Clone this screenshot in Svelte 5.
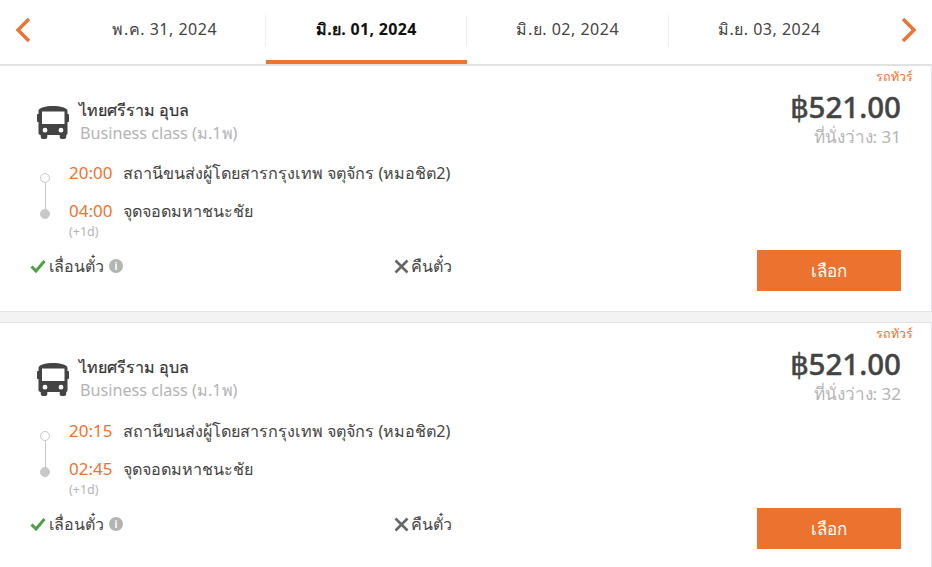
<script>
  let dates = ['พ.ค. 31, 2024', 'มิ.ย. 01, 2024', 'มิ.ย. 02, 2024', 'มิ.ย. 03, 2024']
  let active = 1

  let trips = [
    { from: '20:00', to: '04:00', seats: 31 },
    { from: '20:15', to: '02:45', seats: 32 }
  ]
</script>

<div class="page">
  <div class="tabs">
    <button class="arrow" aria-label="prev">
      <svg width="16" height="26" viewBox="0 0 16 26"><path d="M14 2 L3 13 L14 24" fill="none" stroke="#ee7230" stroke-width="3.4"/></svg>
    </button>
    <div class="dates">
      {#each dates as d, i}
        <div class="date" class:active={i === active} class:first={i === 0}>
          <span>{d}</span>
        </div>
      {/each}
    </div>
    <button class="arrow next" aria-label="next">
      <svg width="16" height="26" viewBox="0 0 16 26"><path d="M2 2 L13 13 L2 24" fill="none" stroke="#ee7230" stroke-width="3.4"/></svg>
    </button>
  </div>

  {#each trips as t}
    <div class="card">
      <div class="tag">รถทัวร์</div>
      <div class="top">
        <div class="company">
          <svg class="bus" width="32" height="33" viewBox="0 0 32 33">
            <path fill="#444" fill-rule="evenodd" d="M1.500 5C1.500 1.500 9 0 16 0s14.500 1.500 14.500 5v3H31c.6 0 1 .4 1 1v6c0 .6-.4 1-1 1h-.5v11c0 1-.5 1.800-1.300 2.200V31c0 1.100-.9 2-2 2h-2.500c-1.100 0-2-.9-2-2v-2H10.300v2c0 1.100-.9 2-2 2H5.800c-1.100 0-2-.9-2-2v-1.800C2 28.800 1.500 28 1.500 27V16H1c-.6 0-1-.4-1-1V9c0-.6.4-1 1-1h.5ZM5 5.500V18H27.500V5.500ZM8 21.800a2.400 2.400 0 1 0 0 4.800 2.400 2.400 0 0 0 0-4.800ZM24 21.800a2.400 2.400 0 1 0 0 4.800 2.400 2.400 0 0 0 0-4.800Z"/>
          </svg>
          <div>
            <div class="name">ไทยศรีราม อุบล</div>
            <div class="klass">Business class (ม.1พ)</div>
          </div>
        </div>
        <div class="price">
          <div class="amount">฿521.00</div>
          <div class="seats">ที่นั่งว่าง: {t.seats}</div>
        </div>
      </div>

      <div class="route">
        <div class="line">
          <span class="dot"></span>
          <span class="rail"></span>
          <span class="dot fill"></span>
        </div>
        <div class="stops">
          <div class="stop"><span class="time">{t.from}</span><span>สถานีขนส่งผู้โดยสารกรุงเทพ จตุจักร (หมอชิต2)</span></div>
          <div class="stop second"><span class="time">{t.to}</span><span>จุดจอดมหาชนะชัย</span></div>
          <div class="plus">(+1d)</div>
        </div>
      </div>

      <div class="bottom">
        <div class="opt change">
          <svg width="16" height="14" viewBox="0 0 16 14"><path d="M1.500 7.500 L6 12 L14.500 2" fill="none" stroke="#4f9e4a" stroke-width="3"/></svg>
          <span>เลื่อนตั๋ว</span>
          <span class="info">i</span>
        </div>
        <div class="opt refund">
          <svg width="15" height="15" viewBox="0 0 15 15"><path d="M1.500 1.500 L13.500 13.500 M13.500 1.500 L1.500 13.500" stroke="#666" stroke-width="2.600"/></svg>
          <span>คืนตั๋ว</span>
        </div>
        <button class="pick">เลือก</button>
      </div>
    </div>
  {/each}
</div>

<style>
  :global(body) {
    margin: 0;
    background: #fff;
    overflow: hidden;
  }

  .page {
    width: 932px;
    height: 567px;
    overflow: hidden;
    background: #f3f3f3;
    font-family: "Noto Sans", "Open Sans", "Liberation Sans", sans-serif;
    color: #444;
  }

  .tabs {
    display: flex;
    align-items: flex-start;
    height: 64px;
    padding: 0 15px;
    background: #fff;
    border-bottom: 2px solid #e2e2e2;
  }
  .arrow {
    background: none;
    border: 0;
    padding: 0;
    margin-top: 17px;
    width: 16px;
    height: 26px;
  }
  .arrow.next { margin-left: auto; }

  .dates {
    display: flex;
    margin-left: 33px;
    height: 64px;
  }
  .date {
    width: 201.500px;
    height: 64px;
    box-sizing: border-box;
    padding-top: 15px;
    display: flex;
    justify-content: center;
    position: relative;
    font-size: 16px;
    line-height: 29px;
    letter-spacing: 0.5px;
    color: #444;
    border-bottom: 4px solid transparent;
  }
  .date::before {
    content: "";
    position: absolute;
    left: -1px;
    top: 15px;
    height: 31px;
    width: 1px;
    background: #eeeef0;
  }
  .date.first::before { display: none; }
  .date.active {
    color: #111;
    font-weight: 700;
    letter-spacing: 0.3px;
    border-bottom-color: #ee7230;
  }

  .card {
    position: relative;
    box-sizing: border-box;
    height: 246px;
    margin-bottom: 10px;
    padding: 30px 30px 0 30px;
    background: #fff;
    border-right: 1px solid #e4e4e6;
    border-bottom: 1px solid #e4e4e6;
  }
  .card + .card {
    border-top: 1px solid #e4e4e6;
  }

  .tag {
    position: absolute;
    right: 18px;
    top: 2px;
    font-size: 12.500px;
    line-height: 18px;
    color: #ee7230;
  }

  .top {
    display: flex;
    justify-content: space-between;
    align-items: flex-start;
  }
  .company {
    display: flex;
    gap: 11px;
    padding-left: 6px;
  }
  .bus { margin-top: 10px; margin-left: 1px; margin-right: -1px; }
  .name {
    font-size: 16px;
    line-height: 28px;
    color: #333;
    -webkit-text-stroke: 0.2px #333;
  }
  .klass {
    font-size: 16.200px;
    line-height: 20px;
    color: #b4b4b4;
    margin: -1px 0 0 1px;
  }
  .price { text-align: right; }
  .amount {
    font-size: 29.500px;
    line-height: 30px;
    font-weight: 500;
    color: #444;
    -webkit-text-stroke: 0.4px #444;
    margin-top: -4px;
  }
  .seats {
    font-size: 17px;
    line-height: 24px;
    color: #b4b4b4;
    margin-top: 3px;
  }

  .route {
    display: flex;
    margin-top: 12px;
  }
  .card + .card .route { margin-top: 13px; }
  .line {
    width: 30px;
    margin-right: 9px;
    display: flex;
    flex-direction: column;
    align-items: center;
    padding-top: 12px;
  }
  .dot {
    width: 10px;
    height: 10px;
    box-sizing: border-box;
    border: 1px solid #c8c8c8;
    border-radius: 50%;
    background: #fff;
  }
  .dot.fill { background: #c8c8c8; }
  .rail {
    width: 1px;
    height: 26px;
    background: #c8c8c8;
  }
  .stops { font-size: 16.150px; color: #444; }
  .stop {
    display: flex;
    line-height: 24px;
  }
  .stop.second { margin-top: 14px; }
  .time {
    width: 54px;
    font-size: 17px;
    color: #ee7230;
  }
  .plus {
    font-size: 12.500px;
    line-height: 18px;
    color: #b4b4b4;
  }

  .bottom {
    display: flex;
    align-items: flex-start;
    margin-top: 13px;
    position: relative;
  }
  .opt {
    display: flex;
    align-items: center;
    gap: 3px;
    font-size: 16px;
    line-height: 24px;
    color: #444;
  }
  .change { width: 364px; }
  .refund { flex: 1; gap: 2px; }
  .info {
    width: 14px;
    height: 14px;
    margin-left: 2px;
    border-radius: 50%;
    background: #b4b4b4;
    color: #fff;
    font-size: 10px;
    line-height: 14px;
    font-weight: 700;
    text-align: center;
  }
  .pick {
    width: 144px;
    height: 41px;
    border: 0;
    margin-top: -4px;
    background: #ec722f;
    color: #fff;
    font-family: inherit;
    font-size: 17px;
    padding-bottom: 2px;
  }
</style>
